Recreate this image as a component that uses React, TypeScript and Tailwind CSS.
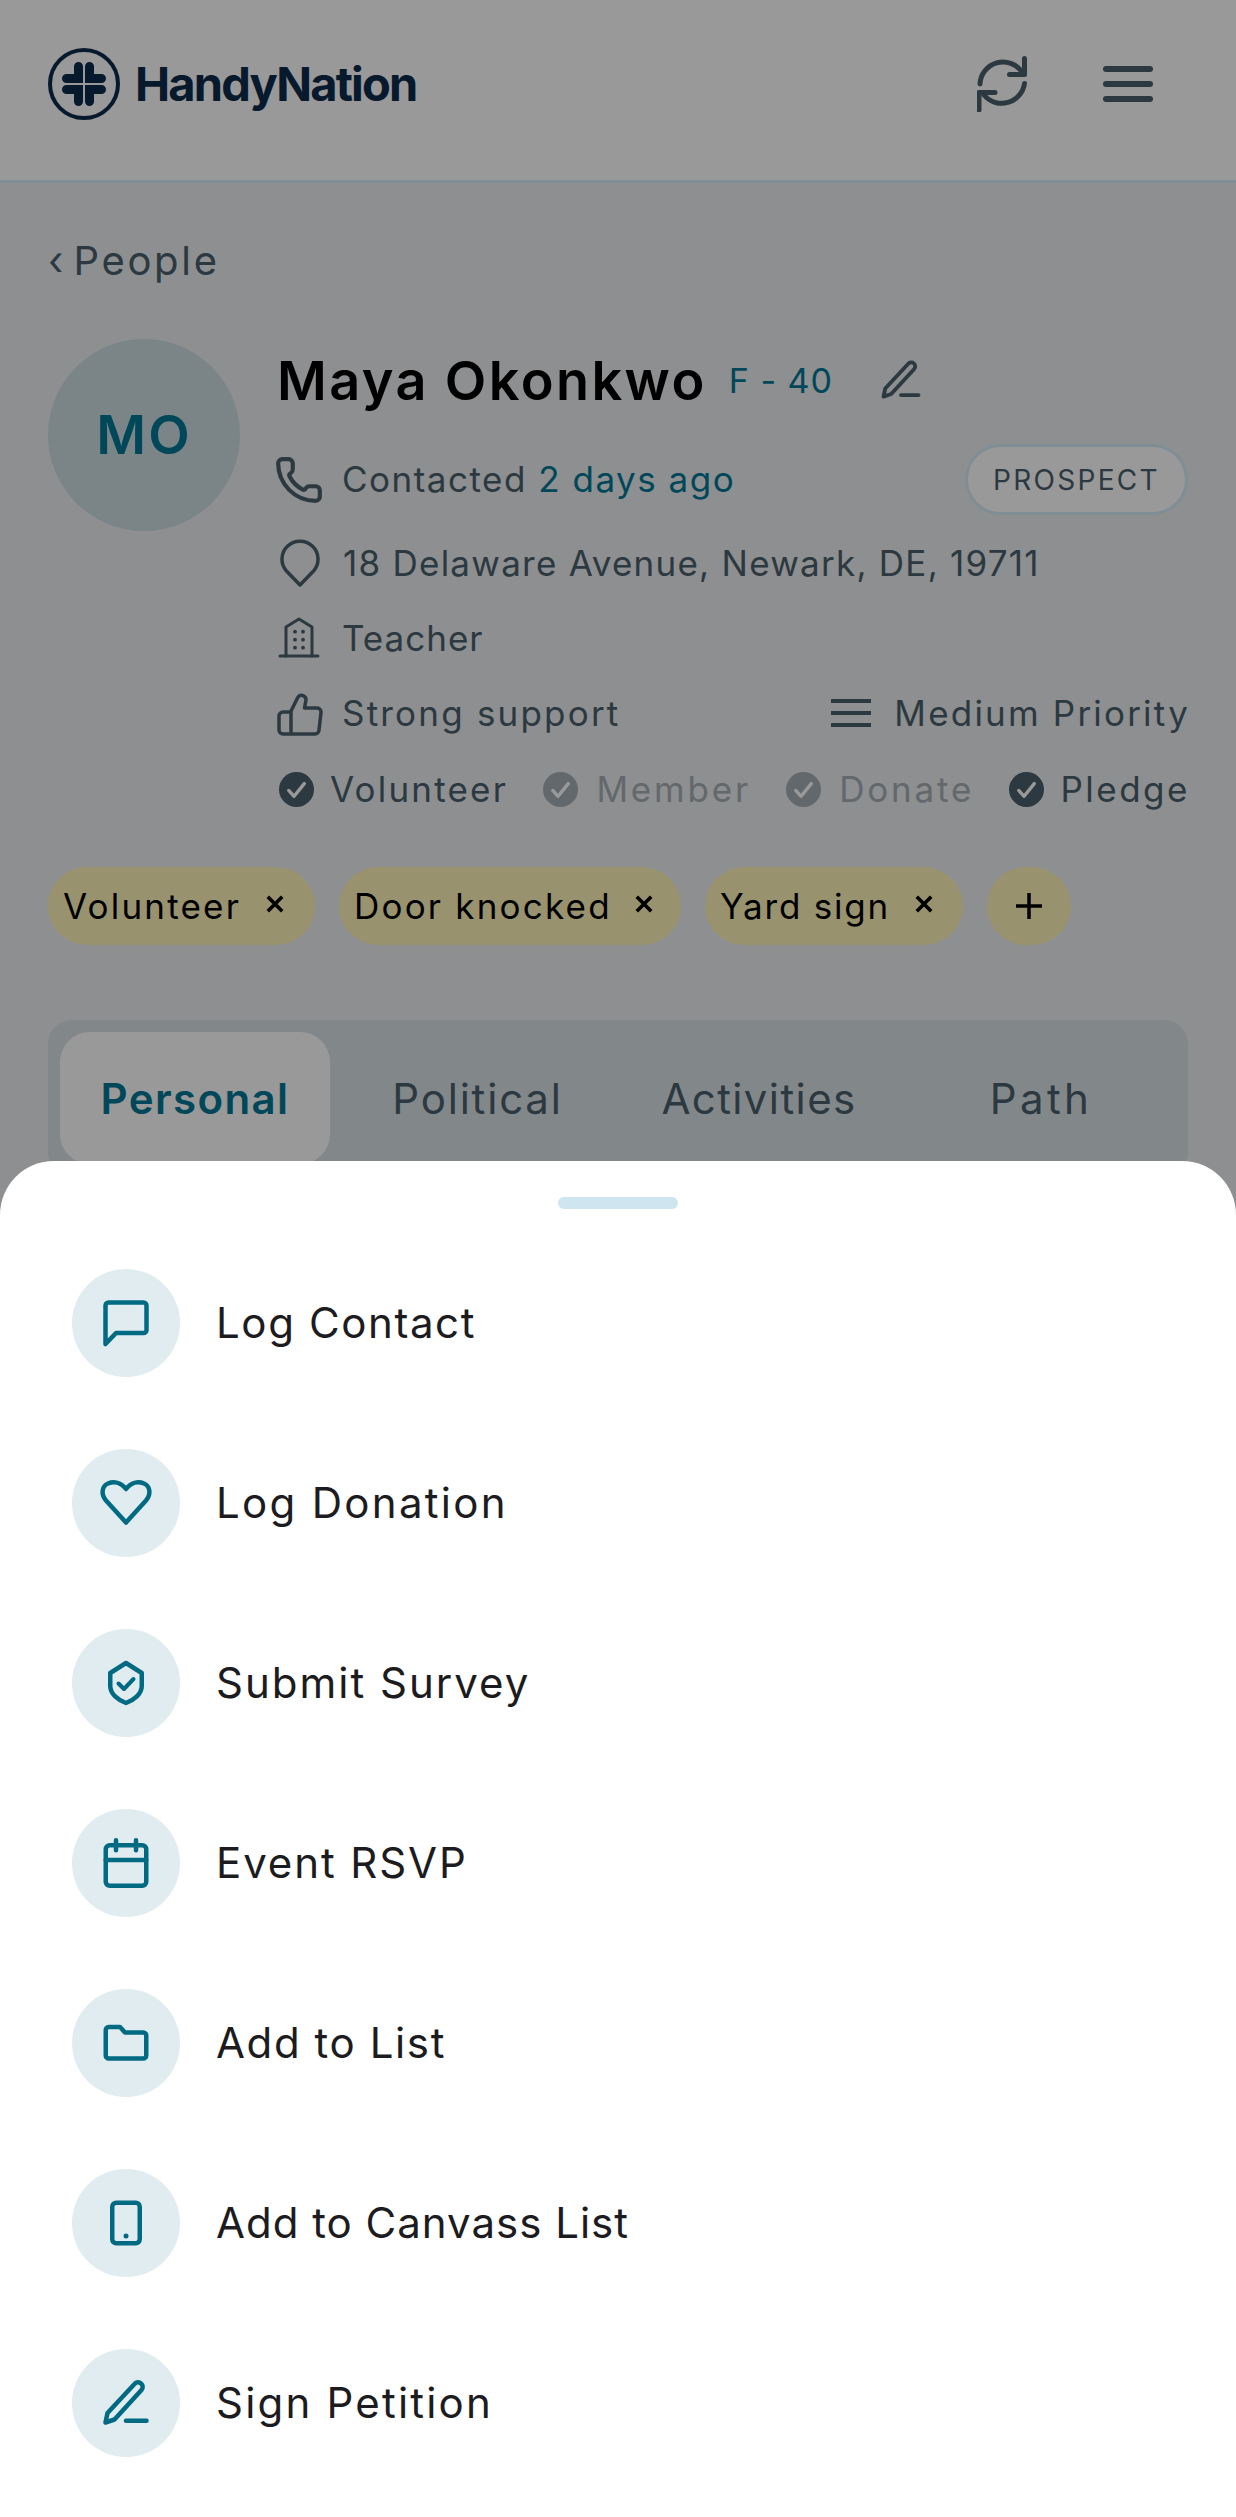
import { Phone } from 'lucide-react';

const actions = [
  { label: 'Log Contact', icon: 'chat', track: 'tracking-[1.6px]' },
  { label: 'Log Donation', icon: 'heart', track: 'tracking-[2.3px]' },
  { label: 'Submit Survey', icon: 'shield', track: 'tracking-[2px]' },
  { label: 'Event RSVP', icon: 'calendar', track: 'tracking-[1.9px]' },
  { label: 'Add to List', icon: 'folder', track: 'tracking-[1.6px]' },
  { label: 'Add to Canvass List', icon: 'phone', track: 'tracking-[1px]' },
  { label: 'Sign Petition', icon: 'pen', track: 'tracking-[2.2px]' },
];

function PenIcon({ className }: { className?: string }) {
  return (
    <svg viewBox="0 0 54 54" fill="none" stroke="currentColor" strokeWidth="4.5" strokeLinecap="round" strokeLinejoin="round" className={className}>
      <path d="M6.5 46.5l2-9.5L35.5 8a4.5 4.5 0 0 1 6.5-.5 4.5 4.5 0 0 1 .5 6.5L15.5 43.5z" />
      <path d="M27 44.7h20.5" />
    </svg>
  );
}

function ActionIcon({ name }: { name: string }) {
  const cls = 'w-[54px] h-[54px] text-[#006a82]';
  if (name === 'chat') {
    return (
      <svg viewBox="0 0 54 54" fill="none" stroke="currentColor" strokeWidth="4.5" strokeLinejoin="round" className={cls}>
        <path d="M6.5 9.5a3 3 0 0 1 3-3h35a3 3 0 0 1 3 3V34a3 3 0 0 1-3 3H17L6.5 48z" />
      </svg>
    );
  }
  if (name === 'heart') {
    return (
      <svg viewBox="0 0 54 54" fill="none" stroke="currentColor" strokeWidth="4.5" strokeLinejoin="round" className={cls}>
        <path d="M27 46.5L7 24.5C1.5 18 3 10 9 7.5c6-2.5 13-1 18 5.5 5-6.5 12-8 18-5.5 6 2.5 7.5 10.5 2 17z" />
      </svg>
    );
  }
  if (name === 'shield') {
    return (
      <svg viewBox="0 0 54 54" fill="none" stroke="currentColor" strokeWidth="4.5" strokeLinecap="round" strokeLinejoin="round" className={cls}>
        <path d="M27 7l15.75 10v13C42.75 38 35 44 27 47c-8-3-15.75-9-15.75-17V17z" />
        <path d="M19.5 27.5l5.5 5.5 9.5-10" strokeWidth="4" />
      </svg>
    );
  }
  if (name === 'calendar') {
    return (
      <svg viewBox="0 0 54 54" fill="none" stroke="currentColor" strokeWidth="4.5" strokeLinecap="round" strokeLinejoin="round" className={cls}>
        <rect x="6.75" y="9.25" width="40.5" height="40.5" rx="4" />
        <path d="M17 4.25v10M37 4.25v10M6.75 24h40.5" />
      </svg>
    );
  }
  if (name === 'folder') {
    return (
      <svg viewBox="0 0 54 54" fill="none" stroke="currentColor" strokeWidth="4.5" strokeLinejoin="round" className={cls}>
        <path d="M6.75 14a3 3 0 0 1 3-3H21l5 5.5h18.25a3 3 0 0 1 3 3V39.5a3 3 0 0 1-3 3H9.75a3 3 0 0 1-3-3z" />
      </svg>
    );
  }
  if (name === 'phone') {
    return (
      <svg viewBox="0 0 54 54" fill="none" stroke="currentColor" strokeWidth="4.5" className={cls}>
        <rect x="13.25" y="6.75" width="27.5" height="40.5" rx="4" />
        <circle cx="27" cy="40" r="2.5" fill="currentColor" stroke="none" />
      </svg>
    );
  }
  return <PenIcon className={cls} />;
}

function Check({ muted }: { muted?: boolean }) {
  return (
    <svg viewBox="0 0 36 36" className={`w-[35px] h-[35px] shrink-0 ${muted ? 'text-[#a3aeb4]' : 'text-[#4a606b]'}`}>
      <circle cx="18" cy="18" r="18" fill="currentColor" />
      <path d="M10 19l5.5 6L26 12" fill="none" stroke="white" strokeWidth="3.5" strokeLinecap="round" strokeLinejoin="round" />
    </svg>
  );
}

function Tag({ label, w, track, mr }: { label: string; w: string; track: string; mr: string }) {
  return (
    <div className={`flex items-center h-[78px] rounded-full bg-[#fff3ba] pl-[15px] text-black ${w}`}>
      <span className={`text-[35px] ${track}`}>{label}</span>
      <svg viewBox="0 0 20 20" className={`w-[18px] h-[18px] ml-auto mb-[4px] ${mr}`} fill="none" stroke="currentColor" strokeWidth="4">
        <path d="M2 2l16 16M18 2L2 18" />
      </svg>
    </div>
  );
}

export default function App() {
  return (
    <div className="relative w-[1236px] h-[2517px] overflow-hidden bg-[#eceef0] font-['Inter',sans-serif] text-[#4a606b]">
      <header className="flex items-center h-[183px] pb-[12px] bg-white border-b-[3px] border-[#d4edf7] px-[48px]">
        <svg viewBox="0 0 72 72" className="w-[72px] h-[72px] text-[#0d2b4a]">
          <circle cx="36" cy="36" r="34" fill="none" stroke="currentColor" strokeWidth="4" />
          <path d="M30.5 18.5V30.5H18.5M41.5 18.5V30.5H53.5M30.5 53.5V41.5H18.5M41.5 53.5V41.5H53.5" stroke="currentColor" strokeWidth="9" strokeLinecap="round" fill="none" />
        </svg>
        <span className="ml-[15px] text-[47px] font-bold tracking-[-1.8px] text-[#0d2b4a]">HandyNation</span>
        <svg viewBox="12 11 50 56" className="ml-auto w-[50px] h-[56px]" fill="none" stroke="currentColor" strokeWidth="5" strokeLinecap="round" strokeLinejoin="round">
          <path d="M15 39A23 23 0 0 1 57 27" />
          <path d="M59.5 13.5V29.5H44.5" />
          <path d="M59.5 38.5A23 23 0 0 1 19 50" />
          <path d="M14 65V47.5H30" />
        </svg>
        <svg viewBox="0 0 50 36" className="ml-[76px] mr-[35px] w-[50px] h-[36px]" fill="none" stroke="currentColor" strokeWidth="6" strokeLinecap="round">
          <path d="M3 3h44M3 18h44M3 33h44" />
        </svg>
      </header>

      <main className="px-[48px]">
        <div className="mt-[54px] h-[48px] flex items-center text-[40px]">
          <span>‹</span>
          <span className="ml-[10px] tracking-[2.7px]">People</span>
        </div>

        <div className="mt-[54px] flex gap-[37px]">
          <div className="w-[192px] h-[192px] pb-[2px] shrink-0 rounded-full bg-[#cddde2] flex items-center justify-center text-[54px] font-semibold text-[#007894] tracking-[2px]">
            MO
          </div>
          <div className="flex-1">
            <div className="mt-[17px] h-[48px] flex items-center">
              <span className="text-[54px] font-semibold text-black tracking-[2.4px]">Maya Okonkwo</span>
              <span className="ml-[22px] text-[34px] text-[#007894] tracking-[1px]">F - 40</span>
              <PenIcon className="ml-[45px] w-[46px] h-[46px]" />
            </div>
            <div className="mt-[40px] h-[71px] flex items-center">
              <Phone className="w-[50px] h-[50px] -ml-[3px]" strokeWidth={2} />
              <span className="ml-[18px] text-[35px] tracking-[1.5px]">Contacted <span className="text-[#007894]">2 days ago</span></span>
              <span className="ml-auto h-[71px] px-[25px] rounded-full bg-white border-[3px] border-[#d4edf7] flex items-center text-[28px] tracking-[2.3px]">PROSPECT</span>
            </div>
            <div className="mt-[24px] h-[48px] flex items-center">
              <svg viewBox="0 0 40 48" className="w-[40px] h-[48px] ml-[3px]" fill="none" stroke="currentColor" strokeWidth="3.5" strokeLinejoin="round">
                <path d="M20 46L6 31.5A18 18 0 1 1 34 31.5z" />
              </svg>
              <span className="ml-[23px] text-[35px] tracking-[1.25px]">18 Delaware Avenue, Newark, DE, 19711</span>
            </div>
            <div className="mt-[27px] h-[48px] flex items-center">
              <svg viewBox="8 7 44 44" className="w-[44px] h-[44px]" fill="none" stroke="currentColor" strokeWidth="3" strokeLinejoin="round" strokeLinecap="round">
                <path d="M17 47V18L30 10L43 18V47" />
                <path d="M11 47H49" />
                <g fill="currentColor" stroke="none">
                  <circle cx="26" cy="22.7" r="1.9" />
                  <circle cx="34" cy="22.7" r="1.9" />
                  <circle cx="26" cy="30.7" r="1.9" />
                  <circle cx="34" cy="30.7" r="1.9" />
                  <circle cx="26" cy="38.7" r="1.9" />
                  <circle cx="34" cy="38.7" r="1.9" />
                </g>
              </svg>
              <span className="ml-[21px] text-[35px] tracking-[1px]">Teacher</span>
            </div>
            <div className="mt-[27px] h-[48px] flex items-center">
              <svg viewBox="6 83 46 44" className="w-[46px] h-[44px] mt-[4px]" fill="none" stroke="currentColor" strokeWidth="3.5" strokeLinejoin="round" strokeLinecap="round">
                <path d="M20 124V101L27 87a4.5 4.5 0 0 1 8 3L33.5 98H46a4 4 0 0 1 4 4.5L48 120a4 4 0 0 1-4 4H12a4 4 0 0 1-4-4V106a4 4 0 0 1 4-4H20" />
              </svg>
              <span className="ml-[19px] text-[35px] tracking-[2.2px]">Strong support</span>
              <svg viewBox="0 0 40 28" className="ml-auto w-[40px] h-[28px]" fill="none" stroke="currentColor" strokeWidth="4">
                <path d="M0 2h40M0 14h40M0 26h40" />
              </svg>
              <span className="ml-[23px] -mr-[2px] text-[35px] tracking-[2.2px]">Medium Priority</span>
            </div>
            <div className="mt-[28px] h-[48px] pl-[2px] flex items-center justify-between text-[35px]">
              <div className="flex items-center gap-[16px]">
                <Check />
                <span className="tracking-[2.2px]">Volunteer</span>
              </div>
              <div className="flex items-center gap-[18px] text-[#a3aeb4]">
                <Check muted />
                <span className="tracking-[2.8px]">Member</span>
              </div>
              <div className="flex items-center gap-[18px] text-[#a3aeb4]">
                <Check muted />
                <span className="tracking-[2.8px]">Donate</span>
              </div>
              <div className="flex items-center gap-[16px] -mr-[2px]">
                <Check />
                <span className="tracking-[2.5px]">Pledge</span>
              </div>
            </div>
          </div>
        </div>

        <div className="mt-[54px] flex gap-[24px]">
          <Tag label="Volunteer" w="w-[267px]" track="tracking-[2.2px]" mr="mr-[31px]" />
          <Tag label="Door knocked" w="w-[342px]" track="tracking-[2.2px]" mr="mr-[28px]" />
          <Tag label="Yard sign" w="w-[258px]" track="tracking-[1.8px]" mr="mr-[30px]" />
          <div className="w-[84px] h-[78px] rounded-full bg-[#fff3ba] flex items-center justify-center text-black">
            <svg viewBox="0 0 28 28" className="w-[28px] h-[28px]" fill="none" stroke="currentColor" strokeWidth="3.5">
              <path d="M14 1v26M1 14h26" />
            </svg>
          </div>
        </div>

        <div className="mt-[75px] h-[156px] p-[12px] rounded-[24px] bg-[#d9e1e6] flex items-start text-[42px]">
          <div className="w-[270px] h-[132px] shrink-0 rounded-[30px] bg-white flex items-center justify-center font-semibold text-[#007894] tracking-[1.4px]">Personal</div>
          <div className="w-[295px] h-[132px] shrink-0 flex items-center justify-center tracking-[1.8px]">Political</div>
          <div className="w-[268px] h-[132px] shrink-0 flex items-center justify-center tracking-[1.4px]">Activities</div>
          <div className="flex-1 h-[132px] pl-[13px] flex items-center justify-center tracking-[3.4px]">Path</div>
        </div>
      </main>

      {/* dimmed backdrop and the action sheet */}
      <div className="absolute inset-0 bg-black/40" />
      <div className="absolute left-0 right-0 bottom-0 h-[1356px] bg-white rounded-t-[54px]">
        <div className="mx-auto mt-[36px] w-[120px] h-[12px] rounded-full bg-[#cfe5ef]" />
        <div className="mt-[60px] px-[72px] flex flex-col gap-[72px]">
          {actions.map((a) => (
            <div key={a.label} className="flex items-center gap-[36px]">
              <div className="w-[108px] h-[108px] rounded-full bg-[#e0ecf0] flex items-center justify-center">
                <ActionIcon name={a.icon} />
              </div>
              <span className={`pb-[2px] text-[42px] text-[#1c1c20] ${a.track}`}>{a.label}</span>
            </div>
          ))}
        </div>
      </div>
    </div>
  );
}
